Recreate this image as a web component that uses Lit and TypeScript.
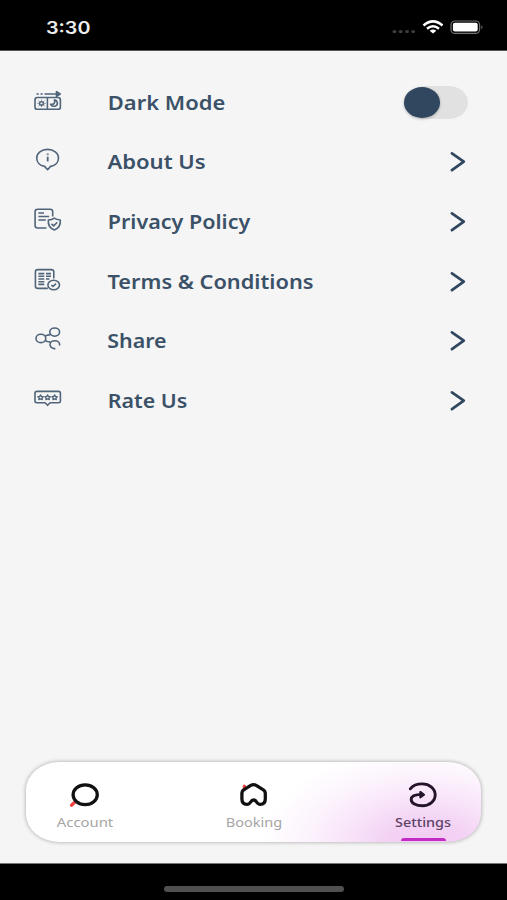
import { LitElement, html, svg, css } from "lit";
import { customElement } from "lit/decorators.js";

const icons = {
  dark: svg`<path d="M2.5 5h2.2M6.5 5h2.2M10.5 5H24"/><path class="fill" d="M22.5 2.6 26.2 5l-3.7 2.4z"/>
    <rect x="1" y="8.5" width="25.4" height="11.8" rx="2.4"/><path d="M13.4 8.7v11.4"/>
    <ellipse cx="7.5" cy="14.4" rx="2" ry="1.7"/><path class="thin" d="M7.5 10.6v1M7.5 17.2v1M3.4 14.4h1M10.6 14.4h1M4.5 11.8l1 .8M9.6 16.2l1 .8M10.5 11.8l-1 .8M5.5 16.2l-1 .8"/>
    <path d="M20.4 10.9c3.4.6 4 4.6 1.2 6-2 .9-4.2.3-5-1.6 3 .6 5-1.5 3.8-4.4z"/>`,
  info: svg`<path d="M13.6 21.7 10.6 18.4C5.7 17.5 2.7 14 2.7 9.9 2.7 4.9 7.6 1.4 13.6 1.4s10.9 3.5 10.9 8.5c0 4.1-3 7.6-7.9 8.5z"/>
    <path class="bold" d="M13.7 8.700v4.700"/><circle class="fill" cx="13.700" cy="6.300" r=".3"/>`,
  privacy: svg`<path d="M18.700 8.500V3.600Q18.700 1.300 16.100 1.300H3.700Q1.100 1.300 1.100 3.600v14Q1.100 20 3.700 20H12.500"/>
    <path d="M4.400 5h5.600M4.400 8.500h10.700M4.400 12h7.400"/>
    <path d="M20.300 10.200c2 1.500 4 1.700 6 1.800.4 5.200-1.700 8.400-6 9.900-4.300-1.500-6.400-4.700-6-9.900 2.200-.1 4-.3 6-1.800z"/><path d="m17.400 15.900 2.200 2 3.700-3.600"/>`,
  terms: svg`<path d="M19.800 10.400V3.800Q19.800 1.600 17.200 1.600H4Q1.400 1.600 1.400 3.800v14.400Q1.400 20.400 4 20.400h9.800"/>
    <path d="M4.400 5.600h5.900M12 5.600h5M4.400 8.300h5.900M12 8.300h5M4.400 11h5.900M12 11h3.500M4.400 13.700h5.900M4.400 16.400h5.900"/>
    <ellipse cx="19.700" cy="17" rx="5.800" ry="4.800"/><path d="m17.300 17 1.700 1.500 3-2.800"/>`,
  share: svg`<ellipse cx="6.900" cy="11.400" rx="4.900" ry="4.200"/><ellipse cx="20.700" cy="5.100" rx="4.900" ry="4.100"/>
    <path d="m11 9 3-.9q1.900-.4 2.700-1M11 13.600l2.300.9q2 .4 3 .3M21.400 21.600h-1.700c-2-.6-3.700-2.100-3.700-4 0-2.100 2.100-3.800 4.800-3.800s4.800 1.700 4.800 3.800v1"/>`,
  rate: svg`<path d="M3 4.400h21.400q2 0 2 1.700v7.900q0 1.700-2 1.700h-8.300l-2.500 2.600-2.500-2.600H3q-2 0-2-1.700V6.100q0-1.700 2-1.700z"/>
    ${[6.6, 13.6, 20.6].map((x) => svg`<path class="star" d="M${x} 7.900l.8 1.500 1.900.3-1.300 1.200.3 1.700-1.700-.8-1.700.8.3-1.700-1.300-1.200 1.900-.3z"/>`)}`,
};

const rows = [
  { icon: icons.dark, label: "Dark Mode", x: 0.8, w: 117.5, toggle: true },
  { icon: icons.info, label: "About Us", x: 0.4, w: 98.3 },
  { icon: icons.privacy, label: "Privacy Policy", x: 0.8, w: 142.5 },
  { icon: icons.terms, label: "Terms & Conditions", x: 0.5, w: 206 },
  { icon: icons.share, label: "Share", x: 0.3, w: 59.3 },
  { icon: icons.rate, label: "Rate Us", x: 0.8, w: 79.5 },
];

const tabs = [
  { label: "Account", w: 56.5, active: false, icon: svg`<path class="accent" d="M16 29 12.500 32.200"/><ellipse cx="26.200" cy="21.800" rx="12.100" ry="9.900"/>` },
  { label: "Booking", w: 56.5, active: false, icon: svg`<path class="accent" d="M16.400 13.200v3"/><path d="M13.900 20.500Q13.900 17.800 16 16.600L22.800 12.400Q25.500 11 28.200 12.400L35 16.600Q37.300 17.900 37.300 20.500V26Q37.300 31.300 32.300 31.300C27.800 31.300 29.300 27 25.600 27S23.500 31.300 18.900 31.300Q13.900 31.300 13.900 26z"/>` },
  { label: "Settings", w: 56, active: true, icon: svg`<path d="M13.300 15.800C15.800 12.600 20.200 10.900 25.200 10.900c7.400 0 13 4.700 13 10.900s-5.600 10.900-12.600 10.900c-6.700 0-11.400-2.500-11.400-6.300 0-3.400 3.800-5 11-5"/><path class="head" d="m23.300 18.900 3.800 2.800-3.800 2.800z"/>` },
];

@customElement("app-root")
export class AppRoot extends LitElement {
  static styles = css`
    :host { display: flex; flex-direction: column; height: 900px; background: #f5f5f5; overflow: hidden; }
    svg { display: block; overflow: visible; flex: none; }
    .status { height: 51px; box-sizing: border-box; background: #000; border-bottom: 1px solid #555; display: flex; align-items: center; justify-content: space-between; padding: 4px 23px 0 46px; flex: none; }
    .clock { font: 600 17px Inter, sans-serif; fill: #eee; }
    .list { flex: 1; padding-top: 22px; }
    .row { height: 59.65px; display: flex; align-items: center; padding: 0 39px 0 34px; box-sizing: border-box; }
    .glyph { fill: none; stroke: #50647a; stroke-width: 1.6; stroke-linejoin: round; }
    .glyph .fill { fill: #50647a; }
    .glyph .thin { stroke-width: .9; }
    .glyph .star { stroke-width: 1.3; }
    .glyph .bold { stroke-width: 1.8; }
    .label { margin-left: 45px; flex: 1; }
    .label text { font: 600 18.8px "Noto Sans", sans-serif; fill: #3b5168; }
    .chevron { fill: none; stroke: #30475f; stroke-width: 2.7; stroke-linecap: round; stroke-linejoin: round; margin-right: 3px; }
    .toggle { width: 65px; height: 33px; border-radius: 20px / 17px; background: #e1e1e1; }
    .thumb { width: 36.5px; height: 31px; margin: 1px 0 0 -3.2px; border-radius: 50%; background: #30475f; box-shadow: 0 1px 3px #0004; }
    .nav { height: 80px; margin: 0 26px 21px; border-radius: 33px / 28px; display: flex; justify-content: space-between; flex: none; padding: 0 26px 0 27px; box-sizing: border-box; box-shadow: 0 0 4px #0005; overflow: hidden;
      background: radial-gradient(ellipse 165px 98px at 400px 84px, #f1caf2 0%, #f3d2f4 25%, #f8e3f9 48%, #fcf3fd 72%, #fff 100%) #fff; }
    .tab { width: 64px; display: flex; flex-direction: column; align-items: center; }
    .tabicon { fill: none; stroke: #111; stroke-width: 3.3; stroke-linecap: round; stroke-linejoin: round; }
    .accent { stroke: #f04444; }
    .active .tabicon { stroke: #24152b; stroke-width: 2.9; }
    .head { fill: #24152b; stroke-width: 2; }
    .tab text { font: 400 13px "Noto Sans", sans-serif; fill: #a5a5a5; }
    .active text { font-weight: 500; fill: #5c4266; }
    .bar { width: 45px; height: 3px; border-radius: 3px 3px 0 0; background: #c32bc6; margin-top: 6px; }
    .home { height: 37px; box-sizing: border-box; border-top: 1px solid #777; background: #000; display: flex; justify-content: center; padding: 22px 0 0 1px; flex: none; }
    .pill { width: 180px; height: 5.5px; border-radius: 3px; background: #505050; }
  `;

  render() {
    return html`
      <div class="status">
        <svg width="45" height="20"><text class="clock" x="0" y="16.5" textLength="44.5" lengthAdjust="spacingAndGlyphs">3:30</text></svg>
        <svg width="92" height="20" viewBox="0 0 92 20">
          <g fill="#3d3d3d">${[2.5, 8.7, 15, 21.1].map((x) => svg`<ellipse cx=${x} cy="14.6" rx="2" ry="1.6"/>`)}</g>
          <g fill="none" stroke="#fff" stroke-width="2.5">
            <path d="M31.5 8.500Q41 .3 50.500 8.500"/><path d="M35 11.700Q41 6.700 47 11.700"/>
          </g>
          <path d="M37.700 13.800Q41 11.400 44.300 13.800L41 16.600z" fill="#fff"/>
          <rect x="59" y="4" width="28.600" height="12.400" rx="4" fill="none" stroke="#737373" stroke-width="1.200"/>
          <rect x="60.900" y="5.800" width="24.800" height="8.800" rx="2" fill="#fff"/>
          <path d="M89.300 8.500q2.600 1.700 0 3.400z" fill="#777"/>
        </svg>
      </div>
      <div class="list">
        ${rows.map((r) => html`
          <div class="row">
            <svg class="glyph" width="28" height="28" viewBox="0 0 28 28">${r.icon}</svg>
            <svg class="label" height="28"><text x=${r.x} y="21.2" textLength=${r.w} lengthAdjust="spacingAndGlyphs">${r.label}</text></svg>
            ${r.toggle
              ? html`<div class="toggle"><div class="thumb"></div></div>`
              : html`<svg class="chevron" width="15" height="20" viewBox="0 0 15 20"><path d="M1.900 1.300 13.800 9.600 1.900 18.100"/></svg>`}
          </div>`)}
      </div>
      <div class="nav">
        ${tabs.map((t) => html`
          <div class="tab ${t.active ? "active" : ""}">
            <svg class="tabicon" width="52" height="50" viewBox="0 -11 52 50">${t.icon}</svg>
            <svg width="58" height="20"><text x=${(58 - t.w) / 2} y="14.7" textLength=${t.w} lengthAdjust="spacingAndGlyphs">${t.label}</text></svg>
            ${t.active ? html`<div class="bar"></div>` : ""}
          </div>`)}
      </div>
      <div class="home"><div class="pill"></div></div>
    `;
  }
}
